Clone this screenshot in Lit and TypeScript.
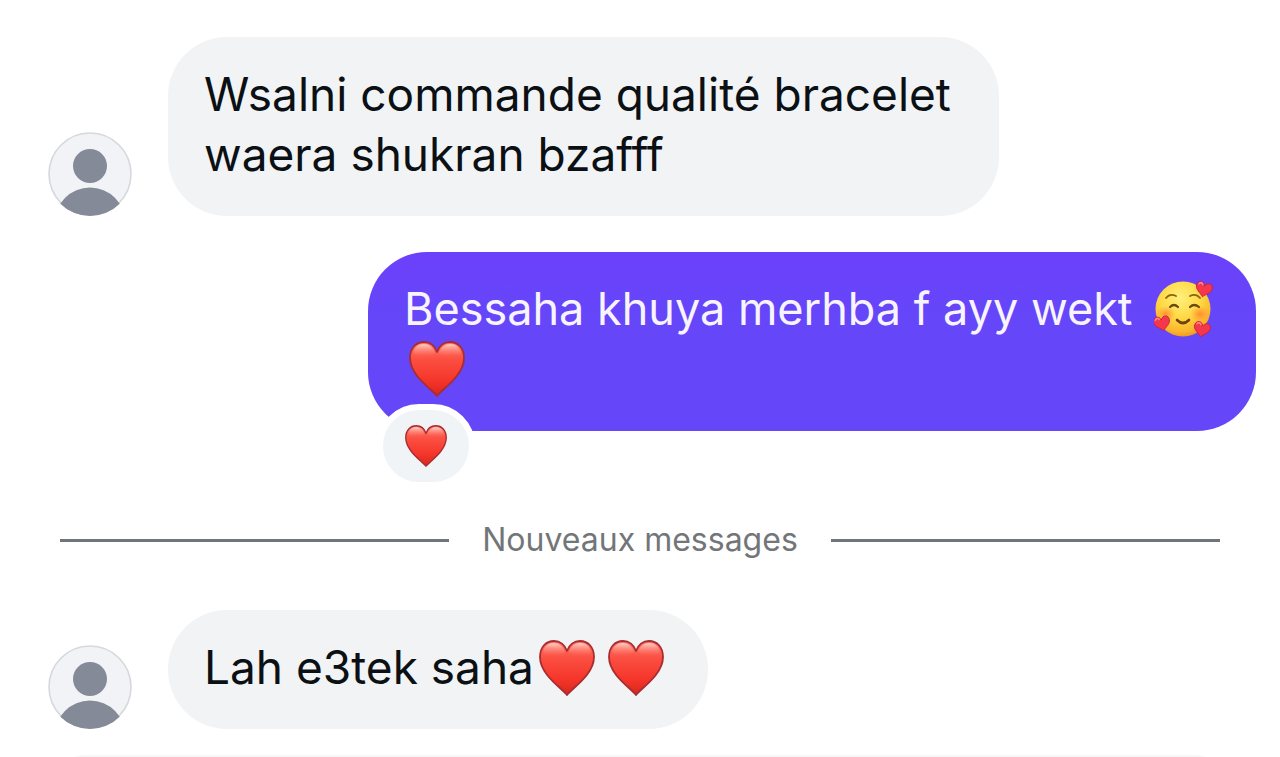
import { LitElement, html, svg, css } from "lit";
import { customElement, property } from "lit/decorators.js";

@customElement("heart-icon")
class HeartIcon extends LitElement {
  static styles = css`
    :host { display: inline-block; width: 56px; height: 56px; }
    svg { display: block; width: 100%; height: 100%; }
  `;
  render() {
    return html`<svg viewBox="0 0 56 56" role="img" aria-label="❤️">
      <defs>
        <linearGradient id="fill" x1="0" y1="0" x2="0" y2="1">
          <stop offset="0" stop-color="#ff7a6c" />
          <stop offset=".32" stop-color="#fb4f42" />
          <stop offset=".7" stop-color="#f5362a" />
          <stop offset="1" stop-color="#d9251e" />
        </linearGradient>
        <linearGradient id="shine" x1="0" y1="0" x2="0" y2="1">
          <stop offset="0" stop-color="#ffd9d0" stop-opacity=".9" />
          <stop offset="1" stop-color="#ff7a6c" stop-opacity="0" />
        </linearGradient>
      </defs>
      <path d="M28 55C24 49 1 35 1 17C1 7 7 1 15 1C21 1 26 5 28 11C30 5 35 1 41 1C49 1 55 7 55 17C55 35 32 49 28 55Z"
        fill="url(#fill)" stroke="#a82c30" stroke-width="1.8" stroke-linejoin="round" />
      <path d="M4 13C5 6 9 3 15 3C20 3 24 6 26 12C22 16 8 17 4 13Z" fill="url(#shine)" />
      <path d="M52 13C51 6 47 3 41 3C36 3 32 6 30 12C34 16 48 17 52 13Z" fill="url(#shine)" />
    </svg>`;
  }
}

@customElement("loving-face")
class LovingFace extends LitElement {
  static styles = css`
    :host { display: inline-block; width: 60px; height: 60px; }
    svg { display: block; width: 100%; height: 100%; }
  `;
  private heart(transform: string) {
    return svg`<path transform=${transform} d="M0 8C-2 5-9 2-8-3C-7-8-1-8 0-3C2-8 8-7 8-2C8 3 2 5 0 8Z"
      fill="#f4374a" stroke="#c71f38" stroke-width=".8" />
      <path transform=${transform} d="M-6-4C-5-6-3-6-2-4" fill="none" stroke="#ff8b94" stroke-width="1.4" stroke-linecap="round" />`;
  }
  render() {
    return html`<svg viewBox="0 0 60 60" role="img" aria-label="🥰">
      <defs>
        <radialGradient id="skin" cx=".45" cy=".3" r=".72">
          <stop offset="0" stop-color="#fff07c" />
          <stop offset=".5" stop-color="#ffd945" />
          <stop offset=".85" stop-color="#fbb52c" />
          <stop offset="1" stop-color="#ea9422" />
        </radialGradient>
        <radialGradient id="blush">
          <stop offset="0" stop-color="#ff7a2e" stop-opacity=".75" />
          <stop offset="1" stop-color="#ff8a2e" stop-opacity="0" />
        </radialGradient>
      </defs>
      <circle cx="29" cy="29" r="27.5" fill="url(#skin)" />
      <ellipse cx="12" cy="34" rx="10" ry="8" fill="url(#blush)" />
      <ellipse cx="46" cy="34" rx="10" ry="8" fill="url(#blush)" />
      <g fill="none" stroke-linecap="round">
        <path d="M12 18Q16 13 22 16M36 16Q42 13 46 18" stroke="#8a6410" stroke-width="1.8" />
        <path d="M16 27Q20 23 24 27M36 27Q40 23 45 27" stroke="#6b4a12" stroke-width="2.2" />
        <path d="M23 40Q29 46 35 40" stroke="#70420d" stroke-width="2.6" />
      </g>
      ${this.heart("translate(50 9) rotate(12)")}
      ${this.heart("translate(8 43) rotate(-12)")}
      ${this.heart("translate(48 49) rotate(12)")}
    </svg>`;
  }
}

@customElement("user-avatar")
class UserAvatar extends LitElement {
  static styles = css`
    :host { display: block; flex: none; width: 84px; height: 84px; }
    svg { display: block; width: 100%; height: 100%; }
  `;
  render() {
    return html`<svg viewBox="0 0 84 84" aria-hidden="true">
      <defs><clipPath id="disc"><circle cx="42" cy="42" r="42" /></clipPath></defs>
      <circle cx="42" cy="42" r="41" fill="#f1f3f6" stroke="#d6d9dc" stroke-width="1.6" />
      <g clip-path="url(#disc)" fill="#858a98">
        <circle cx="42" cy="34" r="17" />
        <circle cx="42" cy="91" r="35.5" />
      </g>
    </svg>`;
  }
}

@customElement("chat-message")
class ChatMessage extends LitElement {
  @property({ type: Boolean, reflect: true }) outgoing = false;
  static styles = css`
    :host { display: flex; align-items: flex-end; gap: 36px; }
    :host([outgoing]) { justify-content: flex-end; }
    .bubble {
      position: relative;
      box-sizing: border-box;
      max-width: 831px;
      padding: 27px 36px 32px;
      border-radius: 59px;
      background: #f1f3f5;
      color: #0b1014;
      font-size: 46px;
      line-height: 60px;
    }
    :host([outgoing]) .bubble {
      max-width: 888px;
      background: linear-gradient(#6c40fb, #6546f9 35%, #6546f9);
      color: #f8f4ff;
      font-size: 45px;
    }
  `;
  render() {
    return html`
      ${this.outgoing ? null : html`<user-avatar></user-avatar>`}
      <div class="bubble"><slot></slot><slot name="reaction"></slot></div>
    `;
  }
}

@customElement("app-root")
class AppRoot extends LitElement {
  static styles = css`
    :host {
      display: block;
      box-sizing: border-box;
      height: 100vh;
      overflow: hidden;
      padding: 37px 24px 0 48px;
      background: #fff;
      font-family: Inter, "Liberation Sans", sans-serif;
    }
    .thread { display: flex; flex-direction: column; gap: 36px; }
    .emoji { margin: 0 8px -6px 5px; vertical-align: -6px; }
    .face { margin: 0 0 -6px 9px; vertical-align: -9px; }
    .reaction {
      position: absolute;
      left: 9px;
      bottom: -57px;
      display: flex;
      align-items: center;
      justify-content: center;
      box-sizing: border-box;
      width: 98px;
      height: 84px;
      padding: 0;
      border: 6px solid #fff;
      border-radius: 42px;
      background: #f1f4f6;
    }
    .small { width: 42px; height: 42px; }
    .divider {
      display: flex;
      align-items: center;
      gap: 33px;
      margin: 53px 36px 14px 12px;
      color: #737679;
      font-size: 32px;
      line-height: 40px;
    }
    .divider::before, .divider::after {
      content: "";
      flex: 1;
      height: 3px;
      background: #6d767f;
    }
    .next {
      height: 120px;
      margin: -10px 36px 0 12px;
      border-radius: 24px;
      background: #f7f7f7;
    }
  `;
  render() {
    return html`
      <main class="thread">
        <chat-message>Wsalni commande qualité bracelet waera shukran bzafff</chat-message>
        <chat-message outgoing>Bessaha khuya merhba f ayy wekt <loving-face class="face"></loving-face> <heart-icon class="emoji"></heart-icon><button class="reaction" slot="reaction" aria-label="Réaction"><heart-icon class="small"></heart-icon></button></chat-message>
        <div class="divider" role="separator"><span>Nouveaux messages</span></div>
        <chat-message>Lah e3tek saha<heart-icon class="emoji"></heart-icon><heart-icon class="emoji"></heart-icon></chat-message>
        <div class="next"></div>
      </main>
    `;
  }
}
